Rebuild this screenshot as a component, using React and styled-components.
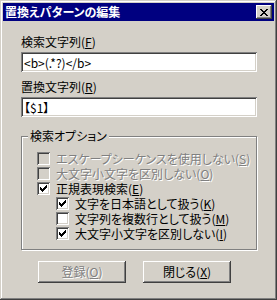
import styled, { createGlobalStyle } from 'styled-components'

const Global = createGlobalStyle`
  html, body {
    margin: 0;
    padding: 0;
    background: #d4d0c8;
  }
  body {
    font-family: "Noto Sans CJK JP", "Noto Sans", sans-serif;
    font-size: 12px;
    line-height: 14px;
    font-feature-settings: "palt";
    color: #000;
  }
`

const Window = styled.div`
  width: 277px;
  height: 300px;
  box-sizing: border-box;
  padding: 3px;
  background: #d4d0c8;
  box-shadow: inset -1px -1px #404040, inset 1px 1px #d4d0c8,
    inset -2px -2px #808080, inset 2px 2px #fff;
  display: flex;
  flex-direction: column;
`

const TitleBar = styled.div`
  height: 18px;
  background: #000080;
  display: flex;
  align-items: center;
  justify-content: space-between;
  padding: 0 2px 0 2px;
`

const TitleText = styled.span`
  color: #fff;
  font-weight: bold;
  font-size: 12px;
  line-height: 18px;
`

const CloseBox = styled.div`
  width: 16px;
  height: 14px;
  background: #d4d0c8;
  box-shadow: inset -1px -1px #404040, inset 1px 1px #fff,
    inset -2px -2px #808080, inset 2px 2px #d4d0c8;
  display: flex;
  align-items: center;
  justify-content: center;
`

const Content = styled.div`
  display: flex;
  flex-direction: column;
  padding: 14px 17px 0 18px;
`

const Label = styled.div`
  line-height: 14px;
  height: 14px;
  margin-top: ${p => p.$gap || 0}px;
  white-space: nowrap;
`

const Key = styled.span`
  text-decoration: underline;
`

const Field = styled.input`
  height: 20px;
  box-sizing: border-box;
  margin-top: 3px;
  border: none;
  outline: none;
  padding: 0 3px;
  background: #fff;
  font-family: inherit;
  font-size: 12px;
  line-height: 14px;
  font-feature-settings: "palt";
  color: #000;
  box-shadow: inset 1px 1px #808080, inset -1px -1px #fff,
    inset 2px 2px #404040, inset -2px -2px #d4d0c8;
`

const Group = styled.div`
  position: relative;
  margin-top: 19px;
  height: 114px;
  box-sizing: border-box;
  border: 1px solid #808080;
  box-shadow: inset 1px 1px #fff, 1px 1px #fff;
  padding: 14px 0 0 15px;
  display: flex;
  flex-direction: column;
`

const Legend = styled.span`
  position: absolute;
  top: -8px;
  left: 6px;
  padding: 0 2px;
  line-height: 14px;
  background: #d4d0c8;
`

const Row = styled.div`
  display: flex;
  align-items: center;
  height: 15px;
  line-height: 14px;
  padding-left: ${p => (p.$indent ? 19 : 0)}px;
  white-space: nowrap;
  color: ${p => (p.$disabled ? '#808080' : '#000')};
  text-shadow: ${p => (p.$disabled ? '1px 1px 0 #fff' : 'none')};
`

const Box = styled.span`
  width: 13px;
  height: 13px;
  flex: none;
  background: ${p => (p.$disabled ? '#d4d0c8' : '#fff')};
  box-shadow: inset 1px 1px #808080, inset -1px -1px #fff,
    inset 2px 2px #404040, inset -2px -2px #d4d0c8;
  display: flex;
  align-items: center;
  justify-content: center;
  margin-right: 6px;
`

const Buttons = styled.div`
  display: flex;
  gap: 17px;
  margin-top: 11px;
  padding-left: 17px;
`

const Button = styled.div`
  width: 88px;
  height: 22px;
  box-sizing: border-box;
  display: flex;
  align-items: center;
  justify-content: center;
  line-height: 14px;
  background: #d4d0c8;
  box-shadow: inset -1px -1px #404040, inset 1px 1px #fff,
    inset -2px -2px #808080, inset 2px 2px #d4d0c8;
  color: ${p => (p.$disabled ? '#808080' : '#000')};
  text-shadow: ${p => (p.$disabled ? '1px 1px 0 #fff' : 'none')};
`

const CloseIcon = () => (
  <svg width="8" height="7" viewBox="0 0 8 7" shapeRendering="crispEdges">
    <path
      fill="#000"
      d="M0 0h2v1H0zM6 0h2v1H6zM1 1h2v1H1zM5 1h2v1H5zM2 2h4v1H2zM3 3h2v1H3zM2 4h4v1H2zM1 5h2v1H1zM5 5h2v1H5zM0 6h2v1H0zM6 6h2v1H6z"
    />
  </svg>
)

const Check = () => (
  <svg width="7" height="7" viewBox="0 0 7 7" shapeRendering="crispEdges">
    <path
      fill="#000"
      d="M6 0h1v1H6zM5 1h2v1H5zM0 2h1v1H0zM4 2h3v1H4zM0 3h2v1H0zM3 3h3v1H3zM0 4h5v1H0zM1 5h3v1H1zM2 6h1v1H2z"
    />
  </svg>
)

const Option = ({ label, k, checked, disabled, indent }) => (
  <Row $disabled={disabled} $indent={indent}>
    <Box $disabled={disabled}>{checked && <Check />}</Box>
    <span>
      {label}(<Key>{k}</Key>)
    </span>
  </Row>
)

export default function App() {
  return (
    <>
      <Global />
      <Window>
        <TitleBar>
          <TitleText>置換えパターンの編集</TitleText>
          <CloseBox>
            <CloseIcon />
          </CloseBox>
        </TitleBar>
        <Content>
          <Label>
            検索文字列(<Key>F</Key>)
          </Label>
          <Field readOnly value="<b>(.*?)</b>" />
          <Label $gap={8}>
            置換文字列(<Key>R</Key>)
          </Label>
          <Field readOnly value="【$1】" />
          <Group>
            <Legend>検索オプション</Legend>
            <Option label="エスケープシーケンスを使用しない" k="S" disabled />
            <Option label="大文字小文字を区別しない" k="O" disabled />
            <Option label="正規表現検索" k="E" checked />
            <Option label="文字を日本語として扱う" k="K" checked indent />
            <Option label="文字列を複数行として扱う" k="M" indent />
            <Option label="大文字小文字を区別しない" k="I" checked indent />
          </Group>
          <Buttons>
            <Button $disabled>
              登録(<Key>O</Key>)
            </Button>
            <Button>
              閉じる(<Key>X</Key>)
            </Button>
          </Buttons>
        </Content>
      </Window>
    </>
  )
}
